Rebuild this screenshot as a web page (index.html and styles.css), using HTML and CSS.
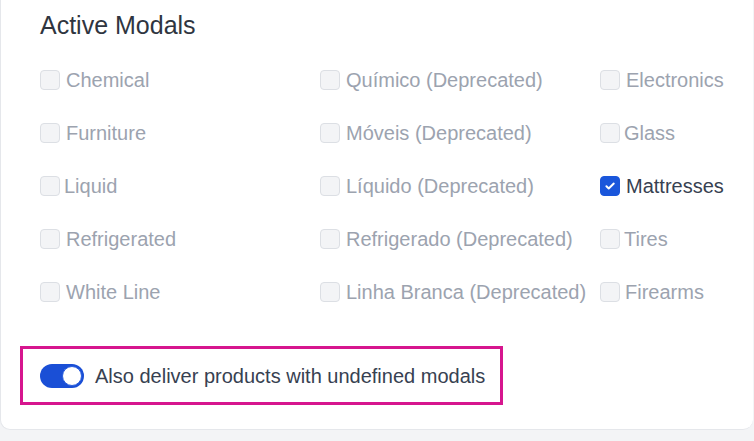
FILE: index.html
```html
<!DOCTYPE html>
<html lang="en">
<head>
<meta charset="utf-8">
<link rel="stylesheet" href="styles.css">
</head>
<body>
<div class="card">
  <h2 class="title">Active Modals</h2>
  <div class="grid">
    <label class="opt"><span class="box"></span><span class="txt">Chemical</span></label>
    <label class="opt"><span class="box"></span><span class="txt">Químico (Deprecated)</span></label>
    <label class="opt"><span class="box"></span><span class="txt">Electronics</span></label>

    <label class="opt"><span class="box"></span><span class="txt">Furniture</span></label>
    <label class="opt"><span class="box"></span><span class="txt">Móveis (Deprecated)</span></label>
    <label class="opt tight"><span class="box"></span><span class="txt">Glass</span></label>

    <label class="opt tight"><span class="box"></span><span class="txt">Liquid</span></label>
    <label class="opt"><span class="box"></span><span class="txt">Líquido (Deprecated)</span></label>
    <label class="opt on"><span class="box checked"><svg viewBox="0 0 20 20" width="20" height="20"><path d="M6 10.3l2.6 2.5L14.2 7.3" fill="none" stroke="#fff" stroke-width="2.2" stroke-linecap="round" stroke-linejoin="round"/></svg></span><span class="txt">Mattresses</span></label>

    <label class="opt"><span class="box"></span><span class="txt">Refrigerated</span></label>
    <label class="opt"><span class="box"></span><span class="txt">Refrigerado (Deprecated)</span></label>
    <label class="opt tight"><span class="box"></span><span class="txt">Tires</span></label>

    <label class="opt"><span class="box"></span><span class="txt">White Line</span></label>
    <label class="opt"><span class="box"></span><span class="txt">Linha Branca (Deprecated)</span></label>
    <label class="opt mid"><span class="box"></span><span class="txt">Firearms</span></label>
  </div>
  <div class="highlight">
    <span class="toggle"><span class="knob"></span></span>
    <span class="toggle-label">Also deliver products with undefined modals</span>
  </div>
</div>
</body>
</html>
```

FILE: styles.css
```css
* { box-sizing: border-box; }
html, body { margin: 0; padding: 0; }
body {
  background: #f3f4f6;
  font-family: "Liberation Sans", Arial, sans-serif;
  width: 754px;
  height: 441px;
  overflow: hidden;
}
.card {
  background: #fff;
  border-radius: 0 0 10px 10px;
  border-left: 1px solid #e5e7eb;
  border-bottom: 1px solid #e5e7eb;
  padding: 9px 0 24px 39px;
  width: 753px;
}
.title {
  margin: 0;
  font-size: 25px;
  line-height: 32px;
  font-weight: 400;
  color: #2f3540;
}
.grid {
  margin-top: 12px;
  display: grid;
  grid-template-columns: 280px 280px 1fr;
  grid-auto-rows: 53px;
}
.opt {
  display: flex;
  align-items: center;
  gap: 6px;
  font-size: 20px;
  color: #9ca3af;
}
.opt.tight { gap: 4px; }
.opt.mid { gap: 5px; }
.box {
  width: 20px;
  height: 20px;
  flex: none;
  border: 1px solid #dcdfe4;
  background: #f3f4f6;
  border-radius: 4px;
  display: flex;
  align-items: center;
  justify-content: center;
}
.box.checked {
  background: #1a56db;
  border-color: #1a56db;
}
.box.checked svg { display: block; }
.opt.on { color: #374151; }
.txt { line-height: 24px; }
.highlight {
  margin: 28px 0 0 -20px;
  display: inline-flex;
  align-items: center;
  gap: 11px;
  height: 59px;
  padding: 0 15px 0 17px;
  border: 3px solid #d6168e;
}
.toggle {
  position: relative;
  width: 44px;
  height: 24px;
  border-radius: 12px;
  background: #1a4fd6;
  flex: none;
}
.knob {
  position: absolute;
  top: 2px;
  right: 2px;
  width: 20px;
  height: 20px;
  border-radius: 50%;
  background: #fff;
  border: 1px solid #2b5fde;
}
.toggle-label {
  font-size: 20px;
  line-height: 24px;
  color: #374151;
}
```
